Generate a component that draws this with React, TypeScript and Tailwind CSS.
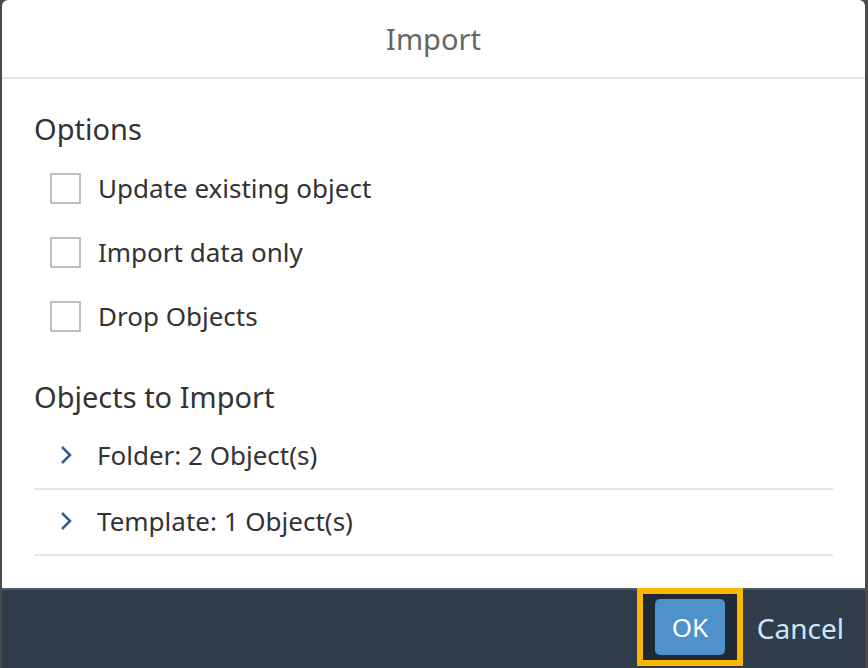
const options = ["Update existing object", "Import data only", "Drop Objects"];
const objects = ["Folder: 2 Object(s)", "Template: 1 Object(s)"];

function Chevron() {
  return (
    <svg width="14" height="20" viewBox="0 0 14 20" className="shrink-0 text-[#2f6497]">
      <path d="M3 2 L11 10 L3 18" fill="none" stroke="currentColor" strokeWidth="2.6" />
    </svg>
  );
}

export default function App() {
  return (
    <div className="h-[668px] w-[868px] overflow-hidden bg-[#4a4a4a] pl-[2px] pr-[3px] font-['Noto_Sans',sans-serif]">
      <div className="flex h-full flex-col overflow-hidden rounded-t-[6px] bg-white">
        {/* header */}
        <div className="flex h-[79px] shrink-0 items-center justify-center border-b-2 border-[#e5e5e5]">
          <h1 className="text-[29px] font-normal text-[#666666]">Import</h1>
        </div>

        {/* body */}
        <div className="flex-1 px-[32px] pt-[32px]">
          <h2 className="text-[29px] leading-[36px] text-[#333333]">Options</h2>
          <div className="mt-[19px] flex flex-col gap-[20px] pl-[16px]">
            {options.map((o) => (
              <label key={o} className="flex h-[44px] items-center gap-[17px]">
                <span className="h-[31px] w-[31px] border-2 border-[#bfbfbf] bg-white" />
                <span className="text-[26px] text-[#333333]">{o}</span>
              </label>
            ))}
          </div>

          <h2 className="mt-[41px] text-[29px] leading-[36px] text-[#333333]">Objects to Import</h2>
          <div className="mt-[9px]">
            {objects.map((o) => (
              <div key={o} className="flex h-[66px] items-center gap-[24px] border-b-2 border-[#e5e5e5] pl-[25px] pb-[2px]">
                <Chevron />
                <span className="text-[26px] text-[#333333]">{o}</span>
              </div>
            ))}
          </div>
        </div>

        {/* footer */}
        <div className="flex h-[80px] shrink-0 items-stretch justify-end gap-[14px] border-t-2 border-[#4a5a6a] bg-[#313d4a] pb-[2px] pr-[21px]">
          <div className="-mt-[2px] flex w-[106px] items-center justify-center border-[6px] border-[#f9b700] bg-[#1f2a35]">
            <button className="h-[56px] w-[70px] rounded-[5px] bg-[#4f91cb] text-[26px] text-white">OK</button>
          </div>
          <button className="text-[28px] text-[#cfe6ff]">Cancel</button>
        </div>
      </div>
    </div>
  );
}
